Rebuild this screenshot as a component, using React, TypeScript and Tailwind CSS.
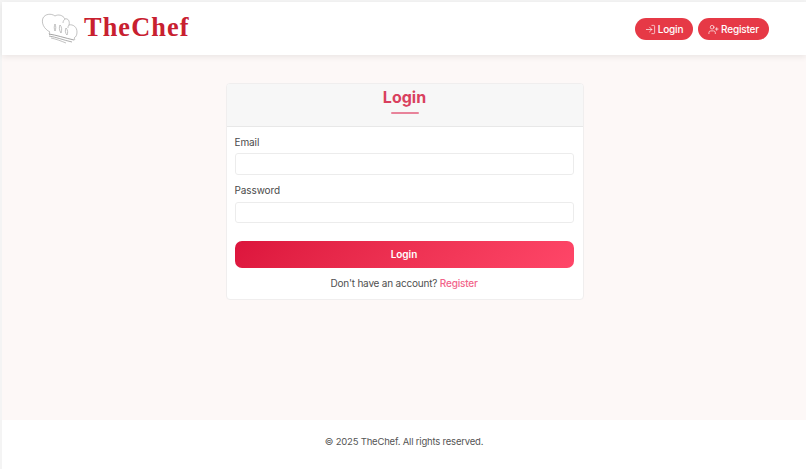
import { LogIn, UserPlus } from 'lucide-react';

const font = "font-['Inter','Open_Sans',sans-serif]";

function ChefHat() {
  return (
    <svg width="38" height="32" viewBox="0 0 38 32" fill="none" stroke="#9a9a9a" strokeWidth="0.6" className="flex-shrink-0">
      <path d="M9 19C3 16 0 10 2 5C4 1 10 0 14 3C17 1 22 2 24 6C27 5 29 8 28 12C32 11 36 14 36 19C36 22 35 24 33 25" />
      <path d="M24 6C23 7 22 8 22 10" />
      <path d="M28 12C27 13 27 14 27 15" />
      <path d="M14 11C13 13 13 16 14 18C15 16 15 13 14 11Z" />
      <path d="M19 12C18 14 18 17 20 20C21 17 21 14 19 12Z" />
      <path d="M25 15C24 17 24 20 26 22C27 20 27 17 25 15Z" />
      <path d="M9 19C8 20 8 21 9 22" />
      <path d="M8 21C15 22 24 25 33 27" strokeWidth="0.9" />
      <path d="M8 23C15 24 22 27 31 29" strokeWidth="0.8" />
      <path d="M10 25C15 26 20 28 25 30" strokeWidth="0.6" />
      <path d="M33 25C34 26 34 27 33 27" />
    </svg>
  );
}

export default function App() {
  return (
    <div className={`${font} w-[806px] h-[469px] bg-[#f4f4f4] pl-[2px] pt-[2px] flex flex-col overflow-hidden`}>
      {/* Navbar */}
      <header className="relative z-10 h-[53px] bg-white shadow-[0_2px_6px_rgba(0,0,0,0.08)] flex items-center justify-between pl-[39px] pr-[37px]">
        <div className="flex items-center gap-[5px]">
          <ChefHat />
          <span className="font-['Liberation_Serif',serif] font-bold text-[26.3px] leading-none tracking-[1.1px] text-[#c8202f]">TheChef</span>
        </div>
        <div className="flex items-center gap-[5px] pt-[1px]">
          <button className="h-[22px] w-[58px] rounded-full bg-[#e63946] text-white text-[10px] tracking-[-0.2px] font-medium flex items-center justify-center gap-[2px]">
            <LogIn className="w-[11px] h-[11px]" strokeWidth={1.5} />
            Login
          </button>
          <button className="h-[22px] w-[71px] rounded-full bg-[#e63946] text-white text-[10px] tracking-[-0.2px] font-medium flex items-center justify-center gap-[2px]">
            <UserPlus className="w-[11px] h-[11px]" strokeWidth={1.5} />
            Register
          </button>
        </div>
      </header>

      {/* Main */}
      <main className="h-[365px] bg-[#fdf8f7] flex justify-center pt-[28px] pl-[1px]">
        <div className="w-[358px] h-[217px] bg-white border border-[#f0eeee] rounded-[4px] overflow-hidden flex flex-col">
          <div className="h-[43px] bg-[#f7f7f7] border-b border-[#e8e8e8] flex flex-col items-center pt-[2px]">
            <h1 className="text-[16px] leading-[22px] font-bold text-[#d9405e]">Login</h1>
            <div className="w-[28px] h-[2px] mt-[4px] rounded-full bg-[#e8839a]" />
          </div>
          <div className="flex-1 pl-[8px] pr-[9px] pt-[8px] flex flex-col">
            <label className="text-[10px] tracking-[-0.1px] leading-[14px] text-[#4a4a4a]">Email</label>
            <input className="mt-[4px] h-[22px] w-full bg-white border border-[#ececec] rounded-[3px]" />
            <label className="mt-[8px] text-[10px] tracking-[-0.1px] leading-[14px] text-[#4a4a4a]">Password</label>
            <input className="mt-[5px] h-[21px] w-full bg-white border border-[#ececec] rounded-[3px]" />
            <button className="mt-[18px] h-[27px] w-full rounded-[7px] bg-linear-135 from-[#dc143c] to-[#ff4668] text-white text-[10px] font-semibold">
              Login
            </button>
            <p className="mt-[8px] text-center text-[10px] tracking-[-0.2px] leading-[14px] text-[#4f4f4f]">
              Don't have an account? <a className="text-[#f2648a] font-medium">Register</a>
            </p>
          </div>
        </div>
      </main>

      {/* Footer */}
      <footer className="flex-1 bg-white flex justify-center pt-[15px]">
        <p className="text-[9.5px] tracking-[-0.2px] leading-[14px] text-[#555555]">© 2025 TheChef. All rights reserved.</p>
      </footer>
    </div>
  );
}
